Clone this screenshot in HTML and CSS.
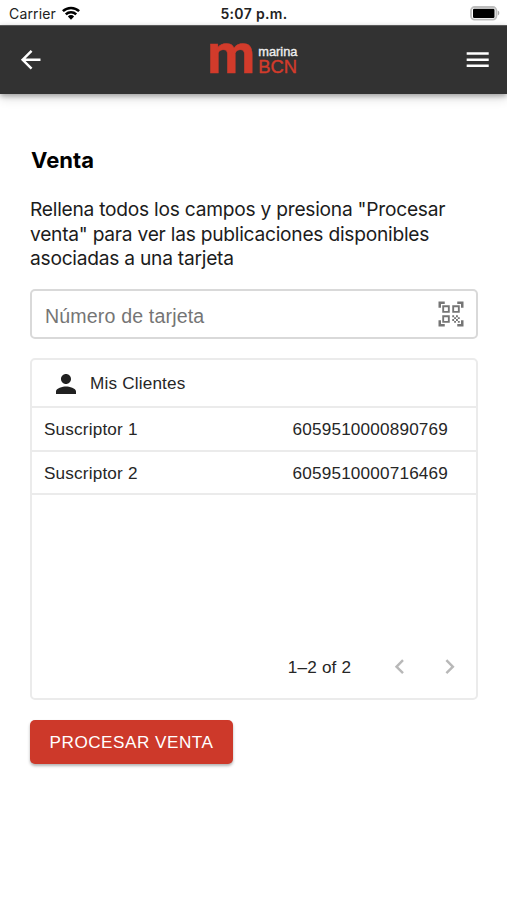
FILE: index.html
```html
<!DOCTYPE html>
<html lang="es">
<head>
<meta charset="utf-8">
<title>Venta</title>
<link rel="stylesheet" href="styles.css">
</head>
<body>
<div class="status">
  <div class="status-left"><span class="carrier">Carrier</span>
    <svg class="wifi" viewBox="0 0 18 14"><g fill="none" stroke="#000" stroke-width="2.500"><path d="M.9 5.2a11.600 11.600 0 0 1 16.200 0"/><path d="M3.800 8.400a7.400 7.400 0 0 1 10.400 0"/></g><path d="M9 13.700 5.900 10.400a4.400 4.400 0 0 1 6.200 0z"/></svg>
  </div>
  <span class="clock">5:07 p.m.</span>
  <svg class="battery" viewBox="0 0 30 15"><rect x="1" y="1" width="25.400" height="12.600" rx="3.600" fill="#fff" stroke="#bdbdbd" stroke-width="1.800"/><rect x="3" y="2.700" width="21.500" height="9.200" rx="1.200"/><path d="M27.800 4.800c2 .5 2 4.100 0 4.600z" fill="#aaa"/></svg>
</div>
<header class="appbar">
  <svg class="back" viewBox="0 0 24 24"><path d="M20 11H7.83l5.59-5.59L12 4l-8 8 8 8 1.41-1.41L7.83 13H20v-2z"/></svg>
  <div class="logo"><span class="logo-m">m</span><div class="logo-words"><span class="logo-marina">marina</span><span class="logo-bcn">BCN</span></div></div>
  <svg class="menu" viewBox="0 0 24 24"><path d="M3 18h18v-2H3v2zm0-5h18v-2H3v2zm0-7v2h18V6H3z"/></svg>
</header>
<main class="content">
  <h1 class="title">Venta</h1>
  <p class="intro">Rellena todos los campos y presiona "Procesar<br>venta" para ver las publicaciones disponibles<br>asociadas a una tarjeta</p>
  <div class="field"><span class="placeholder">Número de tarjeta</span>
    <svg class="qr" viewBox="0 0 24 24"><path d="M9.5 6.5v3h-3v-3h3M11 5H5v6h6V5zm-1.5 9.5v3h-3v-3h3M11 13H5v6h6v-6zm6.500-6.500v3h-3v-3h3M19 5h-6v6h6V5zm-6 8h1.500v1.500H13V13zm1.500 1.500H16V16h-1.500v-1.500zM16 13h1.500v1.500H16V13zm-3 3h1.500v1.500H13V16zm1.500 1.500H16V19h-1.500v-1.500zM16 16h1.500v1.500H16V16zm1.500-1.500H19V16h-1.500v-1.500zm0 3H19V19h-1.500v-1.500zM22 7h-2V4h-3V2h5v5zm0 15v-5h-2v3h-3v2h5zM2 22h5v-2H4v-3H2v5zM2 2v5h2V4h3V2H2z"/></svg>
  </div>
  <section class="grid">
    <div class="grid-head">
      <svg class="person" viewBox="0 0 24 24"><path d="M12 12c2.210 0 4-1.790 4-4s-1.790-4-4-4-4 1.790-4 4 1.790 4 4 4zm0 2c-2.670 0-8 1.340-8 4v2h16v-2c0-2.660-5.330-4-8-4z"/></svg>
      <span>Mis Clientes</span>
    </div>
    <div class="row"><span class="name">Suscriptor 1</span><span class="number">6059510000890769</span></div>
    <div class="row"><span class="name">Suscriptor 2</span><span class="number">6059510000716469</span></div>
    <div class="pager"><span class="range">1–2 of 2</span>
      <svg class="chev" viewBox="0 0 24 24"><path d="M15.410 7.410 14 6l-6 6 6 6 1.410-1.410L10.830 12z"/></svg>
      <svg class="chev next" viewBox="0 0 24 24"><path d="M10 6 8.590 7.410 13.170 12l-4.580 4.590L10 18l6-6z"/></svg>
    </div>
  </section>
  <button class="submit">PROCESAR VENTA</button>
</main>
</body>
</html>
```
FILE: styles.css
```css
* { box-sizing: border-box; }
body { margin: 0; height: 900px; overflow: hidden; background: #fff; color: #262626; font-family: "Liberation Sans", sans-serif; }
svg { display: block; flex: none; }
.status { height: 25px; display: grid; grid-template-columns: 1fr auto 1fr; align-items: center; padding: 2px 7px 0 9px; font-family: Inter, sans-serif; font-size: 14px; color: #222; }
.status-left { display: flex; align-items: center; gap: 6px; }
.carrier { letter-spacing: .15px; }
.wifi { width: 18px; height: 14px; margin-top: -2px; }
.clock { font-weight: 600; font-size: 14px; letter-spacing: .35px; margin-right: 1px; }
.battery { width: 30px; height: 15px; justify-self: end; }
.appbar { height: 69px; background: #323232; border-top: 1px solid #5a5a5a; display: grid; grid-template-columns: 1fr auto 1fr; align-items: center; padding: 0 15px; box-shadow: 0 2px 5px rgba(0,0,0,.3), 0 5px 10px rgba(0,0,0,.12); }
.back, .menu { width: 29.4px; height: 29.4px; fill: #fff; }
.back { margin-left: .6px; }
.menu { justify-self: end; }
.logo { display: flex; align-items: center; gap: 6px; color: #d23b2b; margin-right: 2px; }
.logo-m { font: 700 55px/30px Roboto, sans-serif; letter-spacing: -3px; margin: -12px 0 0; -webkit-text-stroke: .5px #d23b2b; }
.logo-words { display: flex; flex-direction: column; margin-top: -1px; }
.logo-marina { font-size: 12.8px; line-height: 15px; color: #eee; -webkit-text-stroke: .35px #eee; }
.logo-bcn { font-size: 18.4px; line-height: 16px; -webkit-text-stroke: .4px #d23b2b; }
.content { padding: 51px 29px 0 30px; display: flex; flex-direction: column; align-items: stretch; }
.title { margin: 0 0 0 1px; font: 700 22px/30px Inter, sans-serif; letter-spacing: .05px; color: #000; }
.intro { margin: 22px 0 0; font: 400 19.2px/24.5px Inter, sans-serif; letter-spacing: -.25px; white-space: nowrap; color: #1c1c1c; }
.field { margin-top: 18.5px; height: 50px; border: 2px solid #d9d9d9; border-radius: 5px; display: flex; align-items: center; justify-content: space-between; padding: 4px 10px 0 13px; }
.placeholder { font-size: 19.6px; color: #757575; letter-spacing: .15px; }
.qr { width: 30px; height: 30px; fill: #757575; margin-top: -5px; }
.grid { margin-top: 19px; height: 342px; border: 2px solid #ebebeb; border-radius: 5px; display: flex; flex-direction: column; font-size: 17.15px; letter-spacing: .18px; }
.grid-head { height: 48px; flex: none; border-bottom: 2px solid #ebebeb; display: flex; align-items: center; gap: 9px; padding: 1px 0 0 19px; }
.person { width: 30px; height: 30px; fill: #212121; }
.row { height: 43.7px; flex: none; border-bottom: 2px solid #ebebeb; display: flex; align-items: center; justify-content: space-between; padding: 2px 28px 0 12px; }
.pager { margin-top: auto; height: 62px; display: flex; align-items: center; padding: 1px 12px 0 0; justify-content: flex-end; }
.chev { width: 29.4px; height: 29.4px; fill: #b8b8b8; margin: -2px 0 0 34px; }
.next { margin-left: 20px; }
.submit { align-self: flex-start; margin-top: 20px; width: 203px; height: 44px; border: 0; border-radius: 5px; background: #cd392a; color: #fff; font: 400 17.15px "Liberation Sans", sans-serif; letter-spacing: .5px; padding: 1px 0 0; white-space: nowrap; box-shadow: 0 2px 3px rgba(0,0,0,.3); }
```
